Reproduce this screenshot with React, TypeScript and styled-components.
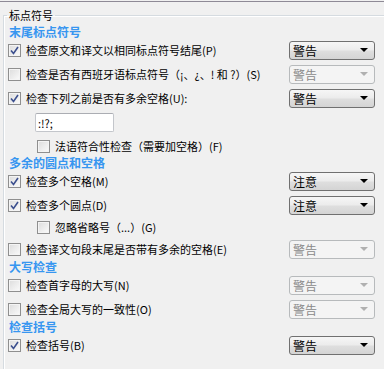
import { createGlobalStyle, styled } from "styled-components";

const GlobalStyle = createGlobalStyle`
  html, body {
    margin: 0;
    padding: 0;
    background: #f0f0f0;
    font-family: "Noto Sans CJK SC", "Noto Sans", sans-serif;
    font-size: 11px;
    color: #000;
  }
`;

const Frame = styled.div`
  margin-top: 1px;
  border-top: 1px solid #8e8a96;
  width: 384px;
  height: 367px;
  overflow: hidden;
`;

const Group = styled.fieldset`
  margin: 6px 0 0 3px;
  padding: 4px 9px 0 4px;
  border: none;
  border-top: 1px solid #d5dbe0;
  border-left: 1px solid #d5dbe0;
  box-shadow: inset 1px 1px 0 #ffffff;
  min-inline-size: 0;
  height: 400px;
  display: flex;
  flex-direction: column;
`;

const Legend = styled.legend`
  padding: 0 2px;
  margin-left: -1px;
  line-height: 14px;
  font-size: 11px;
  color: #000;
`;

const Heading = styled.div`
  height: 12px;
  line-height: 12px;
  margin-left: 1px;
  font-size: 12px;
  font-weight: 700;
  color: #3796f0;
  white-space: nowrap;
`;

const Row = styled.div<{ $h?: number; $indent?: number }>`
  display: flex;
  align-items: center;
  height: ${(p) => p.$h ?? 24}px;
  padding-left: ${(p) => p.$indent ?? 0}px;
`;

const Box = styled.span`
  flex: none;
  width: 11px;
  height: 11px;
  border: 1px solid #8f8f8f;
  background: linear-gradient(135deg, #dcdcdc, #fbfbfb);
  box-shadow: inset 0 0 0 1px #f4f4f4;
  display: flex;
  align-items: center;
  justify-content: center;
  margin-right: 5px;
`;

const Label = styled.span`
  flex: 1;
  white-space: nowrap;
  line-height: 14px;
`;

const Dropdown = styled.div<{ $off?: boolean }>`
  flex: none;
  width: 84px;
  height: 17px;
  border: 1px solid ${(p) => (p.$off ? "#b7babc" : "#707070")};
  border-radius: 3px;
  background: ${(p) =>
    p.$off ? "#f4f4f4" : "linear-gradient(#f6f6f6, #ececec 45%, #dedede 55%, #d4d4d4)"};
  color: ${(p) => (p.$off ? "#8a8a8a" : "#000")};
  font-size: 12px;
  display: flex;
  align-items: center;
  justify-content: space-between;
  padding: 0 6px 0 3px;
  box-sizing: border-box;
  width: 86px;
  height: 19px;
`;

const Arrow = styled.span<{ $off?: boolean }>`
  width: 0;
  height: 0;
  border-left: 4px solid transparent;
  border-right: 4px solid transparent;
  border-top: 4px solid ${(p) => (p.$off ? "#b0b0b0" : "#000")};
`;

const TextBox = styled.input`
  width: 79px;
  height: 19px;
  box-sizing: border-box;
  border: 1px solid #c3c6cb;
  border-top-color: #abadb3;
  border-radius: 2px;
  background: #fff;
  font-family: inherit;
  font-size: 11px;
  padding: 0 2px;
  outline: none;
`;

function Check({ on }: { on?: boolean }) {
  return (
    <Box>
      {on ? (
        <svg width="9" height="9" viewBox="0 0 9 9">
          <path d="M1 4.5 L3.5 7.5 L8 1" fill="none" stroke="#3b4f8e" strokeWidth="1.6" />
        </svg>
      ) : null}
    </Box>
  );
}

function Select({ value, off }: { value: string; off?: boolean }) {
  return (
    <Dropdown $off={off}>
      <span>{value}</span>
      <Arrow $off={off} />
    </Dropdown>
  );
}

type Item = { text: string; on?: boolean; sel?: string; off?: boolean };

function CheckRow({ text, on, sel, off }: Item) {
  return (
    <Row>
      <Check on={on} />
      <Label>{text}</Label>
      {sel ? <Select value={sel} off={off} /> : null}
    </Row>
  );
}

export default function App() {
  return (
    <>
      <GlobalStyle />
      <Frame>
        <Group>
          <Legend>标点符号</Legend>
          <Heading>末尾标点符号</Heading>
          <CheckRow text="检查原文和译文以相同标点符号结尾(P)" on sel="警告" />
          <CheckRow text="检查是否有西班牙语标点符号（¡、¿、! 和 ?）(S)" sel="警告" off />
          <CheckRow text="检查下列之前是否有多余空格(U):" on sel="警告" />
          <Row $h={25} $indent={27}>
            <TextBox defaultValue=":!?;" />
          </Row>
          <Row $h={22} $indent={29}>
            <Check />
            <Label>法语符合性检查（需要加空格）(F)</Label>
          </Row>
          <Heading>多余的圆点和空格</Heading>
          <CheckRow text="检查多个空格(M)" on sel="注意" />
          <CheckRow text="检查多个圆点(D)" on sel="注意" />
          <Row $h={20} $indent={29}>
            <Check />
            <Label>忽略省略号（...）(G)</Label>
          </Row>
          <CheckRow text="检查译文句段末尾是否带有多余的空格(E)" sel="警告" off />
          <Heading>大写检查</Heading>
          <CheckRow text="检查首字母的大写(N)" sel="警告" off />
          <CheckRow text="检查全局大写的一致性(O)" sel="警告" off />
          <Heading>检查括号</Heading>
          <CheckRow text="检查括号(B)" on sel="警告" />
        </Group>
      </Frame>
    </>
  );
}
